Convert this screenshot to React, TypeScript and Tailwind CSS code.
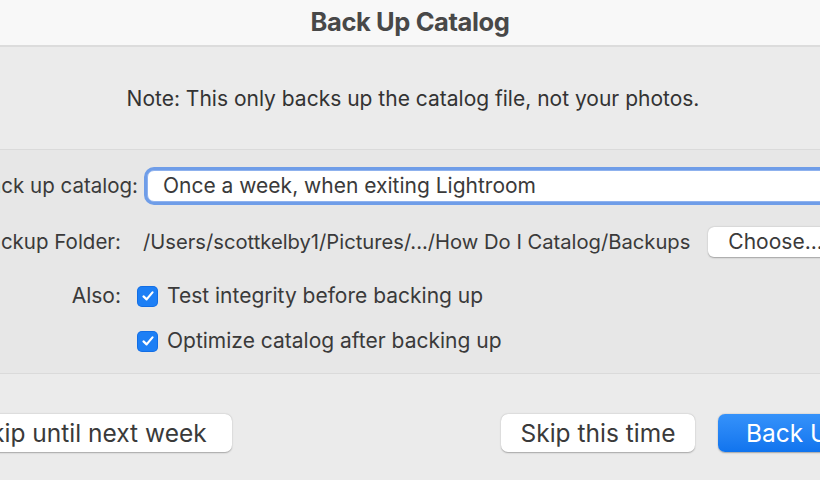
import React from "react";

function Check() {
  return (
    <div className="w-[21px] h-[21px] rounded-[5px] bg-[#1d7ff5] flex items-center justify-center shrink-0 shadow-[inset_0_0_0_1px_rgba(0,80,200,0.35)]">
      <svg width="14" height="14" viewBox="0 0 14 14" fill="none">
        <path d="M2.5 7.4 L5.6 10.4 L11.5 3.4" stroke="white" strokeWidth="2.2" strokeLinecap="round" strokeLinejoin="round" />
      </svg>
    </div>
  );
}

export default function App() {
  return (
    <div className="w-[820px] h-[480px] overflow-hidden bg-[#ebebeb] text-[#3a3a3a]" style={{ fontFamily: "Inter, 'Liberation Sans', sans-serif" }}>
      <div className="h-[47px] bg-[#f8f8f8] border-b-2 border-[#dcdcdc] flex items-center justify-center">
        <span className="text-[25.5px] font-bold text-[#484848] tracking-[-0.4px]">Back Up Catalog</span>
      </div>
      <div className="h-[103px] flex items-center justify-center border-b border-[#dadada] pt-[2px]">
        <span className="text-[21px] text-[#333] pl-[6px]">Note: This only backs up the catalog file, not your photos.</span>
      </div>
      <div className="h-[224px] bg-[#e7e7e7] border-b border-[#dadada] -ml-[60px] w-[940px] pt-[16px] text-[21px]">
        <div className="flex items-center h-[40px]">
          <div className="w-[198px] text-right text-[20.5px]">Back up catalog:</div>
          <div className="ml-[9px] flex-1 h-[32px] bg-white rounded-[7px] border border-[#8fb2ee] ring-[3px] ring-[#6f9de8] flex items-center pl-[15px]">
            Once a week, when exiting Lightroom
          </div>
        </div>
        <div className="flex items-center h-[32px] mt-[20px]">
          <div className="w-[181px] text-right text-[20.5px]">Backup Folder:</div>
          <div className="ml-[22px] text-[20.2px]">/Users/scottkelby1/Pictures/.../How Do I Catalog/Backups</div>
          <div className="ml-[18px] h-[30px] w-[140px] bg-white rounded-[6px] shadow-[0_0.5px_1.5px_rgba(0,0,0,0.3)] flex items-center pl-[20px]">Choose...</div>
        </div>
        <div className="flex items-center h-[30px] mt-[23px]">
          <div className="w-[181px] text-right">Also:</div>
          <div className="ml-[16px]"><Check /></div>
          <div className="ml-[9px]">Test integrity before backing up</div>
        </div>
        <div className="flex items-center h-[30px] mt-[15px]">
          <div className="w-[181px]" />
          <div className="ml-[16px]"><Check /></div>
          <div className="ml-[9px]">Optimize catalog after backing up</div>
        </div>
      </div>
      <div className="flex items-start pt-[40px] text-[24.5px] -ml-[50px] w-[1000px]">
        <div className="h-[38px] w-[282px] bg-white rounded-[7px] shadow-[0_0.5px_1.5px_rgba(0,0,0,0.3)] flex items-center justify-center">Skip until next week</div>
        <div className="ml-[269px] h-[38px] w-[194px] bg-white rounded-[7px] shadow-[0_0.5px_1.5px_rgba(0,0,0,0.3)] flex items-center justify-center">Skip this time</div>
        <div className="ml-[23px] h-[38px] w-[150px] rounded-[7px] bg-gradient-to-b from-[#3592fa] to-[#1074ee] text-white flex items-center pl-[28px] shadow-[0_0.5px_1.5px_rgba(0,0,0,0.3)]">Back Up</div>
      </div>
    </div>
  );
}
